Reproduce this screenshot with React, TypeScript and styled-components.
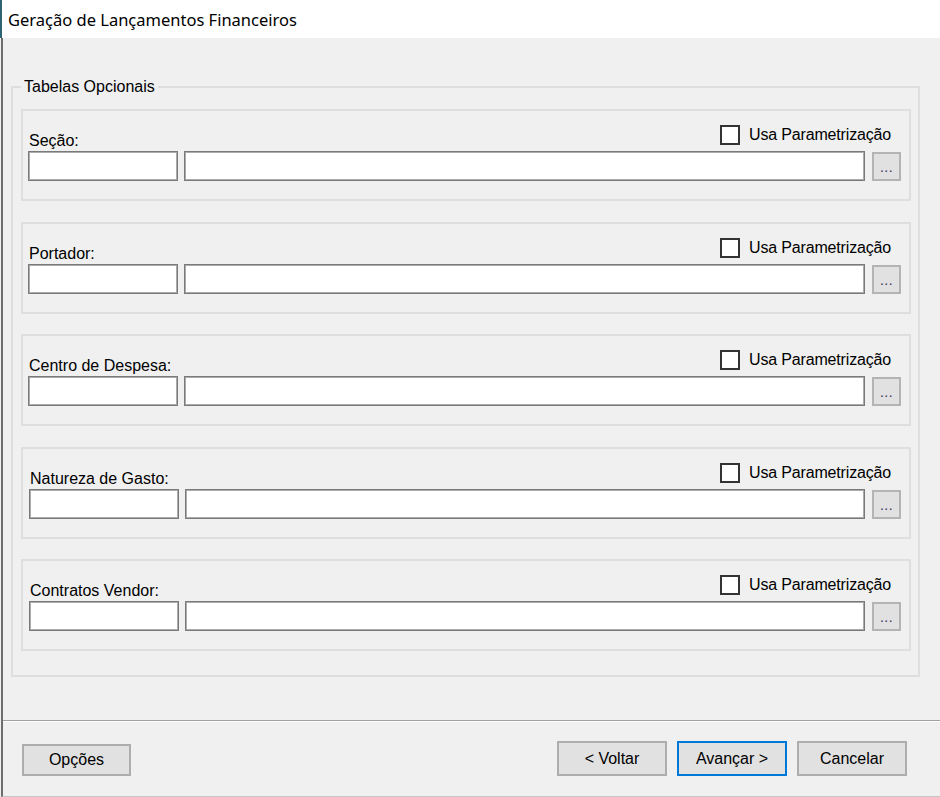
import React from 'react'
import styled, { createGlobalStyle } from 'styled-components'

type Section = {
  label: string
  nudge?: number
}

const sections: Section[] = [
  { label: 'Seção:' },
  { label: 'Portador:' },
  { label: 'Centro de Despesa:' },
  { label: 'Natureza de Gasto:', nudge: 1 },
  { label: 'Contratos Vendor:', nudge: 1 },
]

const GlobalStyle = createGlobalStyle`
  html, body {
    margin: 0;
    padding: 0;
    background: #f0f0f0;
  }
  body {
    font-family: 'Liberation Sans', Arial, sans-serif;
    color: #000;
  }
  * {
    box-sizing: border-box;
  }
`

const Window = styled.div`
  width: 940px;
  height: 797px;
  display: flex;
  flex-direction: column;
  overflow: hidden;
  background: #f0f0f0;
`

const TitleBar = styled.div`
  flex: 0 0 38px;
  display: flex;
  align-items: center;
  padding-left: 6px;
  background: #ffffff;
  border-left: 2px solid #2d6373;
`

const Title = styled.span`
  font-family: 'Noto Sans', 'Open Sans', sans-serif;
  font-size: 16.5px;
  color: #000;
`

const Body = styled.div`
  flex: 1;
  display: flex;
  flex-direction: column;
  margin-left: 1px;
  border-left: 2px solid #6d6d6d;
  border-bottom: 1px solid #c4c4c4;
`

const Content = styled.div`
  flex: 1;
  padding: 40px 20px 0 8px;
`

const GroupBox = styled.fieldset`
  margin: 0;
  padding: 13px 7px 24px 8px;
  border: 2px solid #dedede;
  display: flex;
  flex-direction: column;
  gap: 20.5px;
`

const Legend = styled.legend`
  margin-left: 0;
  padding: 0 3px;
  font-size: 16px;
  line-height: 18px;
`

const Panel = styled.div<{ $nudge: number }>`
  display: flex;
  flex-direction: column;
  padding: 0 8px 18px ${(p) => 5 + p.$nudge}px;
  border: 2px solid #dedede;
`

const TopRow = styled.div`
  height: 40px;
  display: flex;
  justify-content: space-between;
  align-items: flex-end;
`

const FieldLabel = styled.span`
  margin-left: 1px;
  margin-bottom: 1px;
  font-size: 16px;
  line-height: 18px;
`

const CheckOption = styled.label`
  align-self: flex-start;
  margin-top: 14px;
  margin-right: 10px;
  display: flex;
  align-items: center;
  gap: 9px;
  font-size: 16px;
  line-height: 20px;
  letter-spacing: -0.17px;
`

const CheckBox = styled.span`
  width: 20px;
  height: 20px;
  background: #ffffff;
  border: 2px solid #333333;
`

const InputRow = styled.div`
  display: flex;
  align-items: flex-end;
`

const TextBox = styled.div<{ $grow?: boolean }>`
  height: 30px;
  flex: ${(p) => (p.$grow ? '1' : '0 0 150px')};
  margin-left: ${(p) => (p.$grow ? 6 : 0)}px;
  background: #ffffff;
  border: 1px solid #7a7a7a;
  box-shadow: inset 0 0 0 1px #ababab;
`

const LookupButton = styled.button`
  width: 29px;
  height: 29px;
  flex: 0 0 29px;
  margin-left: 7px;
  padding: 0 0 5px;
  display: flex;
  align-items: flex-end;
  justify-content: center;
  background: #e1e1e1;
  border: 2px solid #b4b4b4;
  font-family: 'Liberation Sans', Arial, sans-serif;
  font-size: 14px;
  line-height: 1;
  color: #403060;
  letter-spacing: 0.5px;
`

const Separator = styled.div`
  flex: 0 0 2px;
  border-top: 1px solid #a0a0a0;
  border-bottom: 1px solid #ffffff;
`

const Footer = styled.div`
  flex: 0 0 74px;
  display: flex;
  justify-content: space-between;
  align-items: flex-end;
  padding: 0 33px 20px 19px;
`

const ButtonGroup = styled.div`
  display: flex;
  gap: 10px;
`

const DialogButton = styled.button<{ $default?: boolean; $small?: boolean }>`
  width: ${(p) => (p.$small ? 109 : 110)}px;
  height: ${(p) => (p.$small ? 32 : 35)}px;
  padding: 0;
  background: #e1e1e1;
  border: 2px solid ${(p) => (p.$default ? '#0078d7' : '#adadad')};
  font-family: 'Liberation Sans', Arial, sans-serif;
  font-size: 16px;
  color: #000;
`

const App: React.FC = () => {
  return (
    <>
      <GlobalStyle />
      <Window>
        <TitleBar>
          <Title>Geração de Lançamentos Financeiros</Title>
        </TitleBar>
        <Body>
          <Content>
            <GroupBox>
              <Legend>Tabelas Opcionais</Legend>
              {sections.map((s) => (
                <Panel key={s.label} $nudge={s.nudge ?? 0}>
                  <TopRow>
                    <FieldLabel>{s.label}</FieldLabel>
                    <CheckOption>
                      <CheckBox />
                      Usa Parametrização
                    </CheckOption>
                  </TopRow>
                  <InputRow>
                    <TextBox />
                    <TextBox $grow />
                    <LookupButton>...</LookupButton>
                  </InputRow>
                </Panel>
              ))}
            </GroupBox>
          </Content>
          <Separator />
          <Footer>
            <DialogButton $small>Opções</DialogButton>
            <ButtonGroup>
              <DialogButton>&lt; Voltar</DialogButton>
              <DialogButton $default>Avançar &gt;</DialogButton>
              <DialogButton>Cancelar</DialogButton>
            </ButtonGroup>
          </Footer>
        </Body>
      </Window>
    </>
  )
}

export default App
